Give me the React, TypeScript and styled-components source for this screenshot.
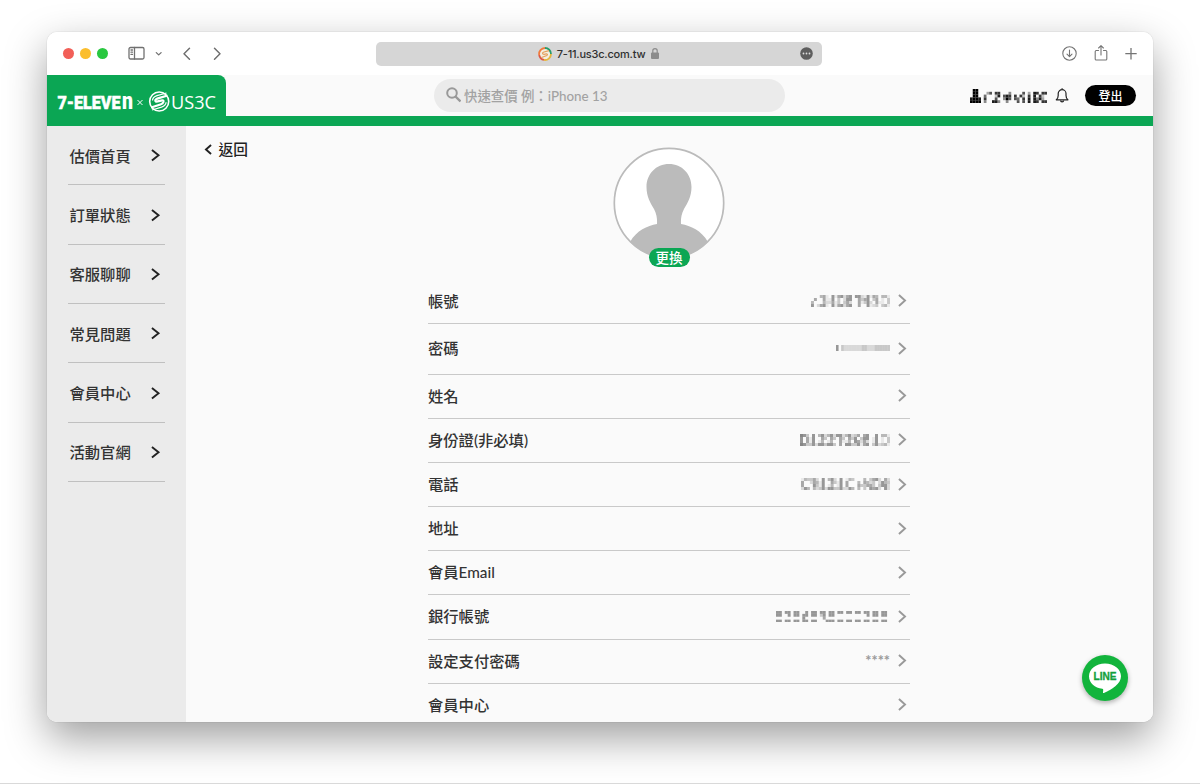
import React from "react";
import styled, { createGlobalStyle } from "styled-components";

const GlobalStyle = createGlobalStyle`
  * { box-sizing: border-box; }
  body {
    margin: 0;
    background: #fff;
    font-family: Lato, "Noto Sans CJK TC", sans-serif;
    color: #333;
  }
  svg { display: block; flex: none; }
`;

const green = "#0ba654";

const Page = styled.div`
  height: 784px;
  padding: 32px 47px 0;
  border-bottom: 1px solid #d9d9d9;
  overflow: hidden;
`;

const Window = styled.div`
  width: 1106px;
  height: 690px;
  border-radius: 10px;
  overflow: hidden;
  background: #fafafa;
`;

const Shadow = styled.div`
  width: 1106px;
  height: 690px;
  border-radius: 10px;
  box-shadow: 0 0 1px rgba(0, 0, 0, 0.35), 0 16px 42px rgba(0, 0, 0, 0.38);
`;

const Toolbar = styled.div`
  display: grid;
  grid-template-columns: 329px 446px 1fr;
  align-items: center;
  height: 43px;
  background: #fff;
`;

const ToolGroup = styled.div`
  display: flex;
  align-items: center;
  padding-left: 16px;
`;

const Lights = styled.div`
  display: flex;
  gap: 6px;
  margin-right: 20px;
`;

const Light = styled.i<{ $color: string }>`
  width: 11px;
  height: 11px;
  border-radius: 50%;
  background: ${(p) => p.$color};
`;

const AddressBar = styled.div`
  display: grid;
  grid-template-columns: 1fr auto 1fr;
  align-items: center;
  height: 24px;
  padding: 0 9px;
  border-radius: 5px;
  background: #d6d6d6;
`;

const Address = styled.div`
  grid-column: 2;
  display: flex;
  align-items: center;
  gap: 5px;
  font: 500 11px Inter, sans-serif;
  letter-spacing: -0.22px;
  color: #303030;
`;

const PageMenu = styled.div`
  justify-self: end;
`;

const ToolActions = styled.div`
  display: flex;
  justify-content: flex-end;
  align-items: center;
  gap: 17px;
  padding-right: 16px;
`;

const Header = styled.header`
  display: flex;
  height: 51px;
  border-bottom: 10px solid ${green};
`;

const LogoTab = styled.div`
  width: 179px;
  height: 41px;
  border-top-right-radius: 8px;
  background: ${green};
`;

const Search = styled.div`
  display: flex;
  align-items: center;
  gap: 3px;
  width: 351px;
  height: 33px;
  margin: 4px 0 0 208px;
  padding: 0 0 2px 12px;
  border-radius: 17px;
  background: #ebebeb;
  color: #a2a2a2;
  font-size: 13.4px;
  font-weight: 500;
`;

const Account = styled.div`
  display: flex;
  align-items: center;
  flex: 1;
  justify-content: flex-end;
  height: 41px;
  padding-right: 17px;
`;

const Notifications = styled.div`
  margin: 0 16px 0 8px;
`;

const LogoutButton = styled.button`
  width: 51px;
  height: 21px;
  padding: 0;
  border: 0;
  border-radius: 11px;
  background: #000;
  color: #fff;
  font: 500 12px/21px "Noto Sans CJK TC", sans-serif;
`;

const Body = styled.div`
  display: flex;
  height: 596px;
`;

const Sidebar = styled.nav`
  width: 138.5px;
  padding: 0 20.5px 0 21px;
  background: #ebebeb;
`;

const NavItem = styled.a`
  display: flex;
  align-items: center;
  justify-content: space-between;
  height: 59.35px;
  padding: 1px 5.5px 0 1.5px;
  border-bottom: 1.4px solid #c0c0c0;
  font-size: 15.3px;
  font-weight: 500;
  color: #333;
`;

const NavLabel = styled.span`
  padding-bottom: 2px;
`;

const Main = styled.main`
  position: relative;
  flex: 1;
  background: #fafafa;
`;

const BackLink = styled.a`
  position: absolute;
  left: 19px;
  top: 12px;
  display: flex;
  align-items: center;
  gap: 7px;
  font-size: 14.7px;
  font-weight: 500;
  line-height: 22px;
  color: #222;
`;

const Profile = styled.div`
  display: flex;
  flex-direction: column;
  align-items: center;
  width: 482px;
  margin-left: 242.5px;
  padding-top: 21px;
`;

const ChangeBadge = styled.span`
  position: relative;
  width: 41px;
  height: 19px;
  margin-top: -11px;
  border-radius: 10px;
  background: ${green};
  color: #fff;
  font: 500 13.5px/18px "Noto Sans CJK TC", sans-serif;
  text-align: center;
`;

const Fields = styled.div`
  width: 100%;
  margin-top: 12px;
`;

const Field = styled.div<{ $height?: number }>`
  display: flex;
  align-items: center;
  height: ${(p) => p.$height ?? 44.15}px;
  padding-bottom: 1px;
  border-bottom: 1px solid #c9c9c9;
  font-size: 15.3px;
  font-weight: 500;
`;

const FieldLabel = styled.span`
  padding-bottom: 2px;
`;

const Value = styled.div`
  display: flex;
  align-items: center;
  gap: 8px;
  margin-left: auto;
  padding-right: 4px;
  color: #999;
`;

const Stars = styled.span`
  font: 700 14.5px/18px Lato, sans-serif;
`;

const LineButton = styled.button`
  position: absolute;
  right: 25px;
  bottom: 21px;
  width: 46px;
  height: 46px;
  padding: 0;
  border: 0;
  border-radius: 50%;
  background: #12b43c;
  box-shadow: 0 2px 5px rgba(0, 0, 0, 0.3);
`;

/* Tiles of the privacy mosaic; each digit is the darkness of one cell. */
const tiles: Record<string, string[]> = {
  "8": ["660", "660", "000", "660"],
  "=": ["660", "000", "000", "660"],
  "]": ["660", "060", "000", "660"],
  d: ["060", "660", "600", "660"],
  "9": ["660", "360", "050", "006"],
  a: ["000", "050", "400", "602"],
  "3": ["451", "051", "042", "561"],
  "4": ["061", "160", "251", "061"],
  o: ["562", "302", "303", "562"],
  b: ["560", "660", "520", "560"],
  "7": ["662", "053", "051", "050"],
  f: ["161", "560", "362", "061"],
  g: ["540", "350", "051", "230"],
  O: ["441", "103", "103", "341"],
  D: ["763", "605", "605", "763"],
  "1": ["060", "160", "160", "362"],
  "2": ["462", "053", "140", "663"],
  h: ["350", "603", "652", "361"],
  c: ["143", "500", "500", "264"],
  n: ["352", "254", "063", "042"],
  N: ["403", "542", "355", "306"],
  ",": ["000", "040", "053", "040"],
  H: ["052", "643", "662", "062"],
};

function Mosaic({ rows, width, height, color = "#666" }: { rows: string[]; width: number; height: number; color?: string }) {
  const cols = rows[0].length;
  return (
    <svg width={width} height={height} viewBox={`0 0 ${cols} ${rows.length}`} preserveAspectRatio="none">
      {rows.flatMap((row, y) =>
        [...row].map((c, x) =>
          c === "0" ? null : <rect key={`${x}-${y}`} x={x} y={y} width={1} height={1} fill={color} opacity={Number(c) / 9} />
        )
      )}
    </svg>
  );
}

const tileRows = (pattern: string) => [0, 1, 2, 3].map((r) => [...pattern].map((t) => tiles[t][r]).join(""));

function Chevron({ w, h, color, stroke, left }: { w: number; h: number; color: string; stroke: number; left?: boolean }) {
  const m = stroke / 2;
  const d = left ? `M${w - m} ${m}L${m} ${h / 2}L${w - m} ${h - m}` : `M${m} ${m}L${w - m} ${h / 2}L${m} ${h - m}`;
  return (
    <svg width={w} height={h} fill="none" stroke={color} strokeWidth={stroke} overflow="visible">
      <path d={d} />
    </svg>
  );
}

function Logo() {
  return (
    <svg width="179" height="51" overflow="visible" fill="#fff">
      <text x="10.500" y="33.500" fontFamily="Roboto" fontWeight="900" fontSize="18.500" textLength="63" lengthAdjust="spacingAndGlyphs" stroke="#fff" strokeWidth="0.500">7-ELEVE</text>
      <text x="75" y="33.500" fontFamily="Roboto" fontWeight="900" fontSize="23" textLength="11" lengthAdjust="spacingAndGlyphs">n</text>
      <path d="M90.500 25l5 5m0-5l-5 5" stroke="#fff" strokeWidth="1" />
      <circle cx="112.200" cy="26.500" r="9.500" fill="none" stroke="#fff" strokeWidth="1.600" />
      <g fill="none" stroke="#fff" strokeWidth="2.300">
        <path d="M120.500 20.500l-9.500 2.800q-3 1-2.600 2.500q.4 1.300 3.400.400l2.300-.600q2.800-.700 2.300 1.400q-.5 1.700-3 2.500l-9.300 3" />
        <path d="M119.500 18l-9.500 2.600q-4.500 1.400-4.500 5" strokeWidth="1.200" />
        <path d="M105 35l9.500-2.900q4.300-1.500 4.600-4.900" strokeWidth="1.200" />
      </g>
      <text x="124" y="33.500" fontFamily="Open Sans" fontSize="18.600" textLength="45" lengthAdjust="spacingAndGlyphs">US3C</text>
    </svg>
  );
}

const navItems = ["估價首頁", "訂單狀態", "客服聊聊", "常見問題", "會員中心", "活動官網"];

const passwordRows = ["603222222233222333333", "603222222233222333333"];
const userRows = [
  "0990000000000000000000000000",
  "0990003607700040000603087077",
  "0990050002806870707207080720",
  "8998070006004960650708084830",
  "9999040088400400060608087077",
];

const fields: { label: string; height?: number; value?: React.ReactNode }[] = [
  { label: "帳號", height: 45.2, value: <Mosaic rows={tileRows("a34ob7fgO")} width={79} height={12} /> },
  { label: "密碼", height: 50.5, value: <Mosaic rows={passwordRows} width={54} height={6} /> },
  { label: "姓名" },
  { label: "身份證(非必填)", value: <Mosaic rows={tileRows("D12272hb1O")} width={90} height={12} /> },
  { label: "電話", value: <Mosaic rows={tileRows("cn121c,NoH")} width={89} height={12} /> },
  { label: "地址" },
  { label: "會員Email" },
  { label: "銀行帳號", value: <Mosaic rows={tileRows("8]8d898===]88")} width={114} height={11.5} /> },
  { label: "設定支付密碼", value: <Stars>****</Stars> },
  { label: "會員中心" },
];

export default function App() {
  return (
    <Page>
      <GlobalStyle />
      <Shadow>
        <Window>
          <Toolbar>
            <ToolGroup>
              <Lights>
                <Light $color="#f25f58" />
                <Light $color="#fbbe2e" />
                <Light $color="#29c840" />
              </Lights>
              <svg width="85" height="16" fill="none" stroke="#707070" strokeWidth="1.300" strokeLinecap="round" strokeLinejoin="round">
                <rect x="1" y="1.500" width="15" height="11.500" rx="1.500" />
                <path d="M6.500 1.500v11.500M3 4h1.500M3 6.200h1.500M3 8.400h1.500" />
                <path d="M28.300 6.600l2.400 2.300L33.100 6.600" />
                <path d="M61.500 2.300L56 7.800l5.500 5.500" strokeWidth="1.500" />
              </svg>
              <svg width="12" height="16" fill="none" stroke="#707070" strokeWidth="1.500" strokeLinecap="round" strokeLinejoin="round">
                <path d="M1.500 2.300L7 7.800l-5.500 5.500" />
              </svg>
            </ToolGroup>
            <AddressBar>
              <Address>
                <svg width="14" height="14" fill="none" strokeWidth="1.800">
                  <circle cx="7" cy="7" r="6.300" fill="#f2eee0" />
                  <path d="M7 1A6 6 0 0 0 1.200 8" stroke="#f07b3d" />
                  <path d="M1.200 8A6 6 0 0 0 6 12.900" stroke="#dc5846" />
                  <path d="M6 12.900A6 6 0 0 0 13 7" stroke="#e5b63e" />
                  <path d="M13 7A6 6 0 0 0 7 1" stroke="#279b6b" />
                  <path d="M11 3.600L6 5q-2 .8-1.200 1.800t3.700 0q1.700.300.300 1.700L3.500 10.500" stroke="#e5a05d" strokeWidth="1.200" />
                </svg>
                <span>7-11.us3c.com.tw</span>
                <svg width="10" height="13" fill="#8c8c8c">
                  <rect x="1" y="5.500" width="8" height="6.500" rx="1" />
                  <path d="M2.800 6V3.800a2.200 2.200 0 0 1 4.400 0V6" fill="none" stroke="#8c8c8c" strokeWidth="1.200" />
                </svg>
              </Address>
              <PageMenu>
                <svg width="13" height="13">
                  <circle cx="6.500" cy="6.500" r="6.300" fill="#5e5e5e" />
                  <g fill="#ddd">
                    <circle cx="3.500" cy="6.500" r=".9" />
                    <circle cx="6.500" cy="6.500" r=".9" />
                    <circle cx="9.500" cy="6.500" r=".9" />
                  </g>
                </svg>
              </PageMenu>
            </AddressBar>
            <ToolActions>
              <svg width="15" height="15" fill="none" stroke="#757575" strokeWidth="1.100" strokeLinecap="round" strokeLinejoin="round">
                <circle cx="7.500" cy="7.500" r="6.700" />
                <path d="M7.500 4v6.500M5 8.200l2.500 2.500L10 8.200" />
              </svg>
              <svg width="14" height="17" fill="none" stroke="#757575" strokeWidth="1.100" strokeLinecap="round" strokeLinejoin="round">
                <path d="M4.500 5.500H2.300Q1.200 5.500 1.200 6.600v7.300q0 1.100 1.100 1.100h9.400q1.100 0 1.100-1.100V6.600Q12.800 5.500 11.700 5.500H9.500M7 10V.8M4.600 3L7 .7l2.400 2.300" />
              </svg>
              <svg width="12" height="12" stroke="#757575" strokeWidth="1.300">
                <path d="M6 0v11.400M.3 5.700h11.400" />
              </svg>
            </ToolActions>
          </Toolbar>
          <Header>
            <LogoTab>
              <Logo />
            </LogoTab>
            <Search>
              <svg width="15" height="17" fill="none" stroke="#999" strokeWidth="2">
                <circle cx="6" cy="7" r="4.800" />
                <path d="M9.500 10.500l5 5" strokeWidth="2.400" />
              </svg>
              快速查價 例：iPhone 13
            </Search>
            <Account>
              <Mosaic rows={userRows} width={77} height={14} color="#000" />
              <Notifications>
                <svg width="14" height="15" fill="none" stroke="#222" strokeWidth="1.200" strokeLinejoin="round">
                  <path d="M1.300 11.800Q3.200 10.200 3.200 7.500V5.600a3.900 3.900 0 0 1 7.800 0v1.900q0 2.700 1.900 4.300zM7.100 1.700V.3" />
                  <path d="M5.600 12.500a1.500 1.300 0 0 0 3 0" />
                </svg>
              </Notifications>
              <LogoutButton>登出</LogoutButton>
            </Account>
          </Header>
          <Body>
            <Sidebar>
              {navItems.map((item) => (
                <NavItem key={item}>
                  <NavLabel>{item}</NavLabel>
                  <Chevron w={8.5} h={12.5} color="#222" stroke={1.9} />
                </NavItem>
              ))}
            </Sidebar>
            <Main>
              <BackLink>
                <Chevron w={7} h={11} color="#222" stroke={1.9} left />
                返回
              </BackLink>
              <Profile>
                <svg width="112" height="112">
                  <clipPath id="avatar">
                    <circle cx="56" cy="56" r="55" />
                  </clipPath>
                  <circle cx="56" cy="56" r="54.500" fill="#fff" />
                  <path
                    clipPath="url(#avatar)"
                    fill="#bbb"
                    d="M56 17C43 17 33.500 27 33.500 40c0 10 4 16 7.500 22 3 6 3.200 10 3 15C34 79 24 83 17 95v19h78V95C88 83 78 79 68 77c-.2-5 0-9 3-15 3.500-6 7.500-12 7.500-22C78.500 27 69 17 56 17z"
                  />
                  <circle cx="56" cy="56" r="54.700" fill="none" stroke="#bbb" strokeWidth="1.700" />
                </svg>
                <ChangeBadge>更換</ChangeBadge>
                <Fields>
                  {fields.map((f) => (
                    <Field key={f.label} $height={f.height}>
                      <FieldLabel>{f.label}</FieldLabel>
                      <Value>
                        {f.value}
                        <Chevron w={8} h={13} color="#999" stroke={1.9} />
                      </Value>
                    </Field>
                  ))}
                </Fields>
              </Profile>
              <LineButton aria-label="LINE">
                <svg width="46" height="46">
                  <path d="M23 8.500c-9 0-16 5.600-16 12.800 0 6.600 5.900 11.700 13.300 12.500.8.200 1 .7.900 1.600l-.2 1.800c-.1.900.4 1.100 1.400.6C29.400 34.600 39 29 39 21.300 39 14.100 32 8.500 23 8.500z" fill="#fff" />
                  <text x="11.500" y="25.200" fontFamily="Liberation Sans" fontWeight="700" fontSize="10" fill="#12a03c" stroke="#12a03c" strokeWidth=".3" textLength="23" lengthAdjust="spacingAndGlyphs">LINE</text>
                </svg>
              </LineButton>
            </Main>
          </Body>
        </Window>
      </Shadow>
    </Page>
  );
}
